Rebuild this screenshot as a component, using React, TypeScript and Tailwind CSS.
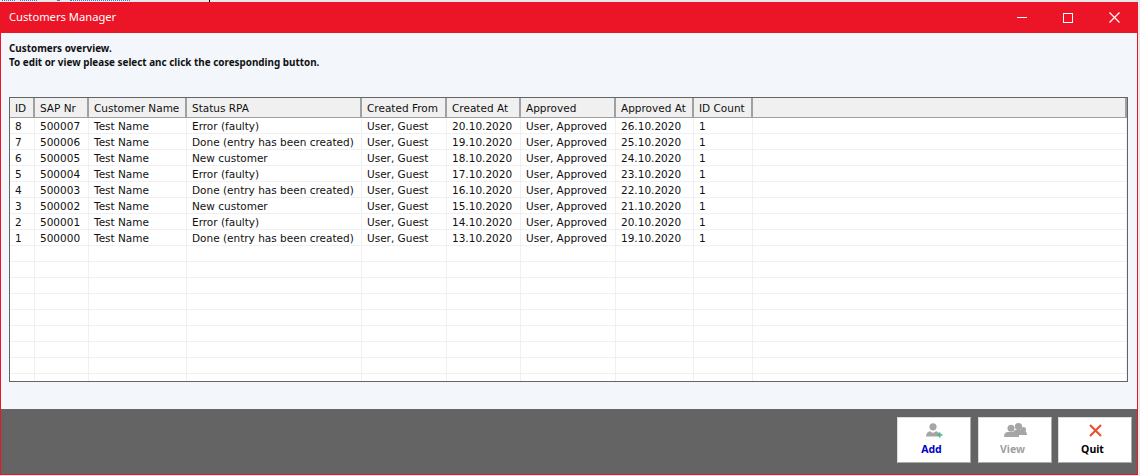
const columns = [
  { label: 'ID', width: 'w-[25px]' },
  { label: 'SAP Nr', width: 'w-[54px]' },
  { label: 'Customer Name', width: 'w-[98px]' },
  { label: 'Status RPA', width: 'w-[175px]' },
  { label: 'Created From', width: 'w-[85px]' },
  { label: 'Created At', width: 'w-[74px]' },
  { label: 'Approved', width: 'w-[95px]' },
  { label: 'Approved At', width: 'w-[78px]' },
  { label: 'ID Count', width: 'w-[59px]' },
  { label: '', width: 'flex-1' },
]

const rows = [
  ['8', '500007', 'Test Name', 'Error (faulty)', 'User, Guest', '20.10.2020', 'User, Approved', '26.10.2020', '1', ''],
  ['7', '500006', 'Test Name', 'Done (entry has been created)', 'User, Guest', '19.10.2020', 'User, Approved', '25.10.2020', '1', ''],
  ['6', '500005', 'Test Name', 'New customer', 'User, Guest', '18.10.2020', 'User, Approved', '24.10.2020', '1', ''],
  ['5', '500004', 'Test Name', 'Error (faulty)', 'User, Guest', '17.10.2020', 'User, Approved', '23.10.2020', '1', ''],
  ['4', '500003', 'Test Name', 'Done (entry has been created)', 'User, Guest', '16.10.2020', 'User, Approved', '22.10.2020', '1', ''],
  ['3', '500002', 'Test Name', 'New customer', 'User, Guest', '15.10.2020', 'User, Approved', '21.10.2020', '1', ''],
  ['2', '500001', 'Test Name', 'Error (faulty)', 'User, Guest', '14.10.2020', 'User, Approved', '20.10.2020', '1', ''],
  ['1', '500000', 'Test Name', 'Done (entry has been created)', 'User, Guest', '13.10.2020', 'User, Approved', '19.10.2020', '1', ''],
]

const emptyRows = Array.from({ length: 9 }, () => columns.map(() => ''))

const AddIcon = () => (
  <svg width="17" height="15" viewBox="0 0 17 15">
    <circle cx="7" cy="3.800" r="3.600" fill="#a6a6a6" />
    <path d="M0 13.500c0-3 1.500-4.800 4-5.300l3 1.800 3-1.800c1.500.3 2.500 1 3 2v3.300z" fill="#a6a6a6" />
    <path d="M11 12h5.500M13.750 9.500v5" stroke="#46b98f" strokeWidth="1.600" />
  </svg>
)

const ViewIcon = () => (
  <svg width="23" height="15" viewBox="0 0 23 15">
    <circle cx="14.500" cy="3.600" r="3.600" fill="#a6a6a6" />
    <circle cx="7" cy="5.200" r="3.500" fill="#a6a6a6" />
    <circle cx="19.500" cy="6.500" r="2.500" fill="#a6a6a6" />
    <path d="M0 14c0-3.500 1.500-5 4-5h5l2-2h6c3.500 0 6 1.500 6 4.500V12h-8v2z" fill="#a6a6a6" />
  </svg>
)

const QuitIcon = () => (
  <svg width="13" height="13" viewBox="0 0 13 13">
    <path d="M1 1l11 11M12 1L1 12" stroke="#f0492a" strokeWidth="2" />
  </svg>
)

const ActionButton = ({ label, color, className, children }: { label: string; color: string; className?: string; children: React.ReactNode }) => (
  <button className={`w-[74px] h-[46px] bg-white border border-[#dcdcdc] border-r-[#ababab] border-b-[#ababab] flex flex-col items-center justify-end pb-[6px] ${className ?? ''}`}>
    <div className="h-[20px] flex items-center justify-center pb-[4px]">{children}</div>
    <span className={`font-['Noto_Sans'] text-[10.5px] leading-[14px] font-bold pr-[5px] ${color}`}>{label}</span>
  </button>
)

export default function App() {
  return (
    <div className="w-[1140px] h-[476px] overflow-hidden bg-[#e9e9e9] font-['DejaVu_Sans','Noto_Sans',sans-serif] text-[10.5px] text-[#111]">
      {/* sliver of the window behind */}
      <div className="h-[2px] flex overflow-hidden">
        <div className="w-[2px]" />
        <div className="w-[13px] self-start border-t border-dotted border-[#2f7fd0]" />
        <div className="w-[5px]" />
        <div className="w-[17px] self-start border-t border-dotted border-[#2f7fd0]" />
        <div className="w-[20px]" />
        <div className="w-[2px] self-start border-t border-dotted border-[#2f7fd0]" />
        <div className="w-[11px]" />
        <div className="w-[60px] self-start border-t border-dotted border-[#2f7fd0]" />
        <div className="w-[79px]" />
        <div className="w-px bg-black" />
      </div>
      <div className="w-[1138px] h-[473px] flex flex-col border border-[#ec1427] border-t-0">
        {/* Title bar */}
        <div className="h-[31px] bg-[#ec1427] flex items-center text-white">
          <span className="pl-[8px] text-[11.2px] font-['Noto_Sans'] flex-1">Customers Manager</span>
          <div className="w-[46px] flex justify-center"><div className="w-[10px] h-px bg-white" /></div>
          <div className="w-[46px] flex justify-center"><div className="w-[10px] h-[10px] border border-white" /></div>
          <div className="w-[46px] flex justify-center">
            <svg width="11" height="11" viewBox="0 0 11 11">
              <path d="M.5.5l10 10M10.500.5l-10 10" stroke="#fff" strokeWidth="1.200" />
            </svg>
          </div>
        </div>

        {/* Body */}
        <div className="flex-1 bg-[#f3f6fb] px-[8px] pt-[8px]">
          <div className="font-['Noto_Sans'] font-bold leading-[14px] text-[9.9px]">
            <div>Customers overview.</div>
            <div>To edit or view please select anc click the coresponding button.</div>
          </div>
          <div className="mt-[28px] h-[285px] w-[1119px] border border-[#646464] bg-white overflow-hidden">
            <div className="flex h-[20px] bg-[#f0f0f0] border-b border-[#a0a0a0]">
              {columns.map((col, i) => (
                <div key={i} className={`${col.width} shrink-0 pl-[5px] pt-px leading-[18px] border-r-2 border-[#a0a0a0] whitespace-nowrap`}>
                  {col.label}
                </div>
              ))}
            </div>
            {[...rows, ...emptyRows].map((row, r) => (
              <div key={r} className="flex h-[16px] border-b border-[#f0f0f0]">
                {columns.map((col, c) => (
                  <div key={c} className={`${col.width} shrink-0 pl-[5px] pt-px leading-[14px] border-r border-[#f0f0f0] whitespace-nowrap`}>
                    {row[c]}
                  </div>
                ))}
              </div>
            ))}
          </div>
        </div>

        {/* Footer */}
        <div className="h-[65px] bg-[#646464] flex justify-end gap-[6px] pt-[8px] pr-[5px]">
          <ActionButton label="Add" color="text-[#0000c8]" className="mr-[1px]"><AddIcon /></ActionButton>
          <ActionButton label="View" color="text-[#a0a0a0]"><ViewIcon /></ActionButton>
          <ActionButton label="Quit" color="text-black"><QuitIcon /></ActionButton>
        </div>
      </div>
    </div>
  )
}
